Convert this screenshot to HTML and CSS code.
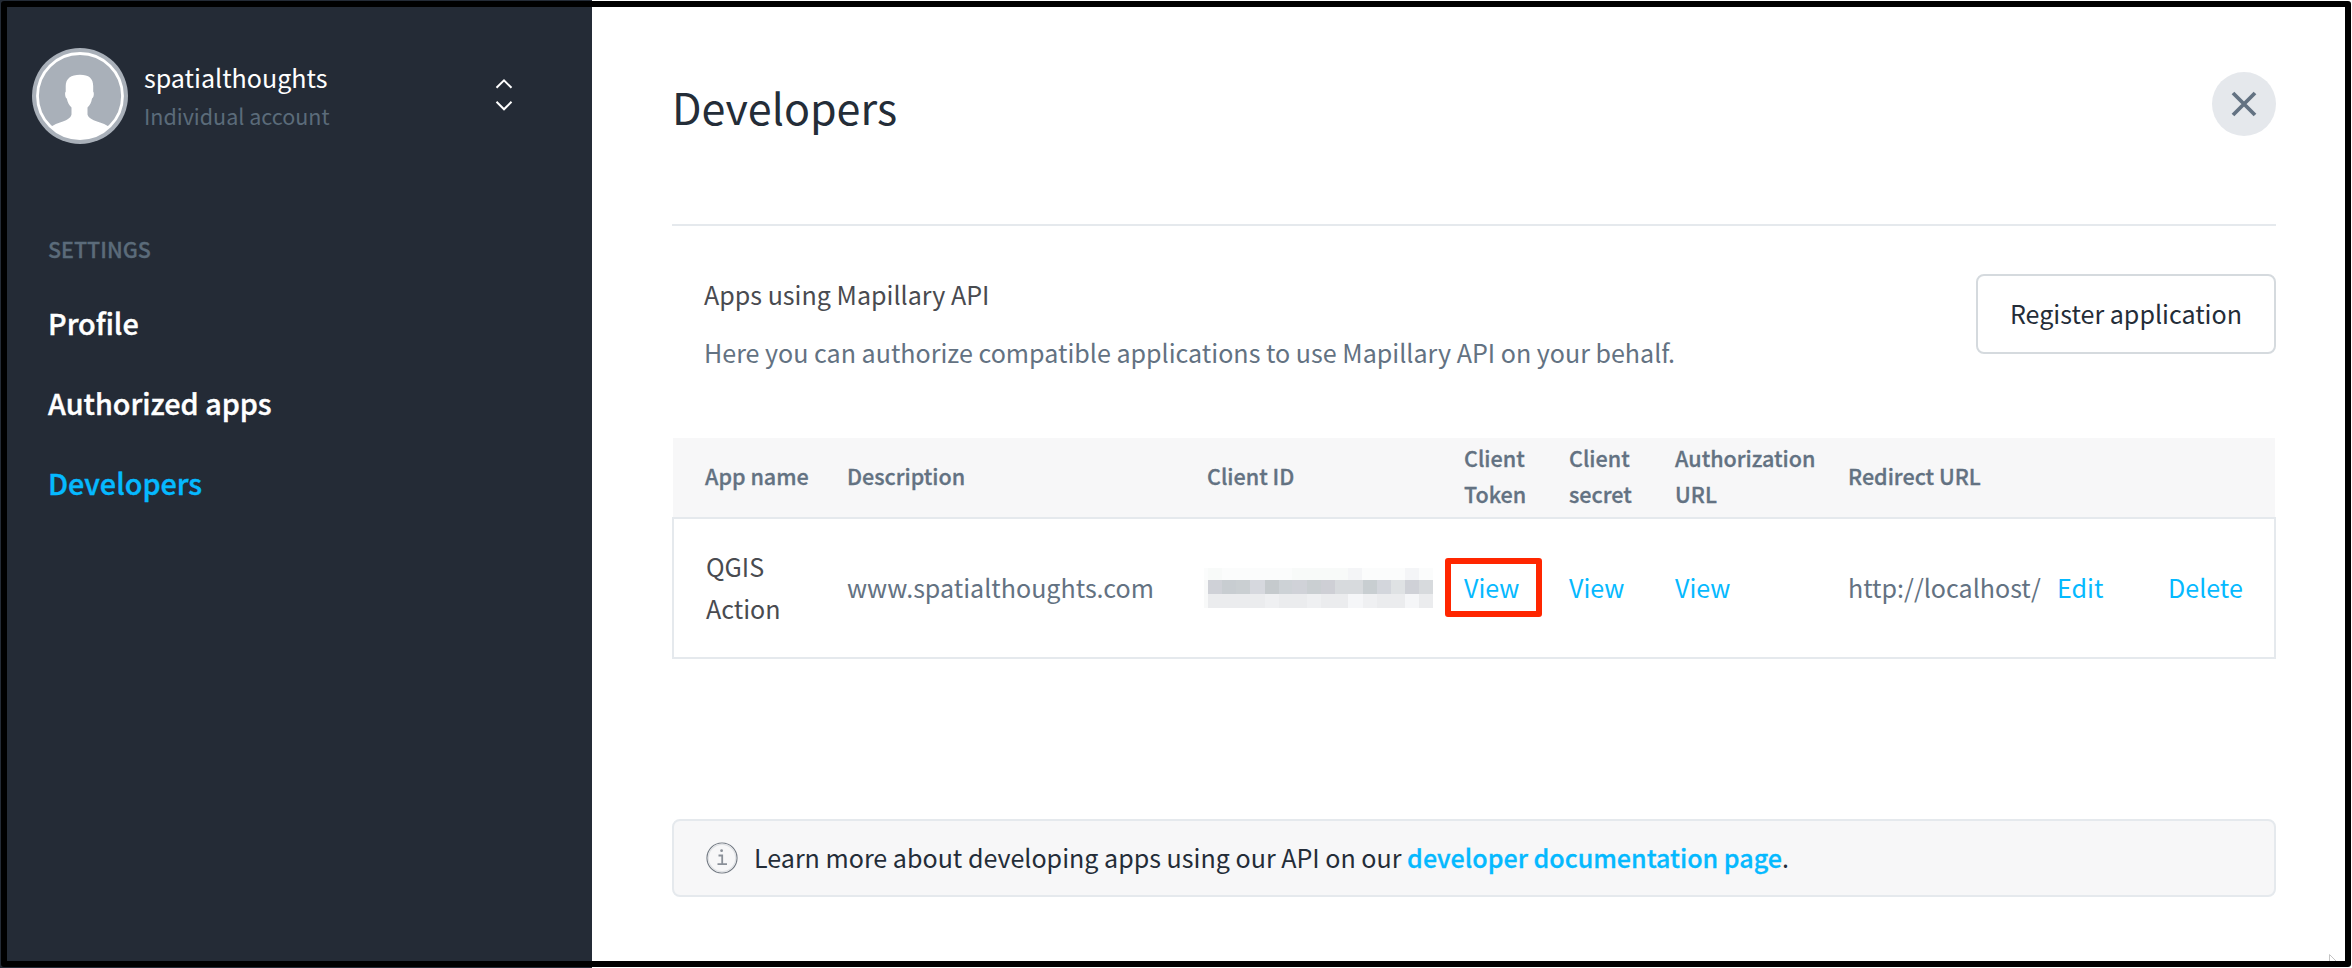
FILE: index.html
```html
<!DOCTYPE html>
<html lang="en">
<head>
<meta charset="utf-8">
<title>Developers</title>
<link rel="stylesheet" href="styles.css">
</head>
<body>
<div class="app">
  <aside class="sidebar">
    <div class="account">
      <svg class="avatar" viewBox="0 0 96 96">
        <defs><clipPath id="disc"><circle cx="48" cy="48" r="42.5"/></clipPath></defs>
        <circle cx="48" cy="48" r="48" fill="#a9b0b9"/>
        <g clip-path="url(#disc)" fill="#fff">
          <path d="M48 26.700C39 26.700 33.700 30.500 33.700 38V43.800C32.600 44.500 33 49.500 34.800 50.600C35.500 54.500 37.300 57.500 39.500 59.500V66.500C38.500 70.500 34 72.500 28 74.500C22 76.500 18 79 14 83V96H82V83C78 79 74 76.500 68 74.500C62 72.500 56.500 70.500 55.500 66.500V59.500C57.700 57.500 59.500 54.500 60 50.600C62 49.500 62.300 44.500 61.200 43.800V38C61.200 30.500 57 26.700 48 26.700Z"/>
        </g>
        <circle cx="48" cy="48" r="42.500" fill="none" stroke="#fff" stroke-width="2.800"/>
      </svg>
      <div class="account-text">
        <div class="account-name">spatialthoughts</div>
        <div class="account-type">Individual account</div>
      </div>
      <svg class="switcher" viewBox="0 0 20 36" fill="none" stroke="#fff" stroke-width="2">
        <path d="M2.500 10.800 10 3.300l7.500 7.500M2.500 24.800l7.500 7.500 7.500-7.500"/>
      </svg>
    </div>
    <div class="group-label">SETTINGS</div>
    <nav class="nav">
      <a class="nav-item">Profile</a>
      <a class="nav-item">Authorized apps</a>
      <a class="nav-item active">Developers</a>
    </nav>
  </aside>
  <main class="main">
    <header class="page-head">
      <h1 class="title">Developers</h1>
      <button class="close" aria-label="Close">
        <svg viewBox="0 0 64 64" fill="none" stroke="#637282" stroke-width="3.800"><path d="M21 21 43 43M43 21 21 43"/></svg>
      </button>
    </header>
    <section class="intro">
      <div>
        <div class="intro-title">Apps using Mapillary API</div>
        <div class="intro-text">Here you can authorize compatible applications to use Mapillary API on your behalf.</div>
      </div>
      <button class="register">Register application</button>
    </section>
    <div class="table">
      <div class="cols thead">
        <span class="c">App name</span><span class="c">Description</span><span class="c">Client ID</span><span class="c">Client<br>Token</span><span class="c">Client<br>secret</span><span class="c">Authorization<br>URL</span><span class="c">Redirect URL</span>
      </div>
      <div class="cols row">
        <span class="c name">QGIS<br>Action</span>
        <span class="c">www.spatialthoughts.com</span>
        <svg class="redacted" viewBox="0 0 229 41" shape-rendering="crispEdges">
          <path fill="#fbfcfc" d="M0 0h229v12H0z"/><path fill="#f8faf9" d="M4 0h14v12H4zM88 0h56v12H88z"/><path fill="#f4f5f7" d="M144 0h14v12h-14zM201 0h14v12h-14z"/>
          <path fill="#f8f9f9" d="M0 12h4v28H0z"/>
          <path fill="#cfd1d7" d="M4 12h14v14H4z"/><path fill="#c8cdd1" d="M18 12h14v14H18z"/><path fill="#cacfd2" d="M32 12h14v14H32z"/><path fill="#d6d8de" d="M46 12h15v14H46z"/><path fill="#c5cacd" d="M61 12h14v14H61z"/><path fill="#cdd2d6" d="M75 12h13v14H75z"/><path fill="#d0d2d8" d="M88 12h15v14H88z"/><path fill="#cacfd2" d="M103 12h14v14h-14z"/><path fill="#cecfd5" d="M117 12h14v14h-14z"/><path fill="#d7dadd" d="M131 12h28v14h-28z"/><path fill="#c8ced1" d="M159 12h14v14h-14z"/><path fill="#d3d6dc" d="M173 12h14v14h-14z"/><path fill="#dfe2e4" d="M187 12h14v14h-14z"/><path fill="#cfd1d7" d="M201 12h14v14h-14z"/><path fill="#d7dadd" d="M215 12h14v14h-14z"/>
          <path fill="#ebecee" d="M4 26h225v14H4z"/><path fill="#eff0f2" d="M61 26h14v14H61zM103 26h14v14h-14zM159 26h14v14h-14z"/><path fill="#f5f6f8" d="M144 26h15v14h-15zM201 26h14v14h-14z"/>
        </svg>
        <span class="c"><a class="link marked">View</a></span>
        <span class="c"><a class="link">View</a></span>
        <span class="c"><a class="link">View</a></span>
        <span class="c">http://localhost/</span>
        <span class="c"><a class="link">Edit</a></span>
        <span class="c"><a class="link">Delete</a></span>
      </div>
    </div>
    <div class="notice">
      <svg class="info" viewBox="0 0 32 32" fill="none">
        <circle cx="16" cy="16" r="15" stroke="#737a83" stroke-width="1.200"/>
        <circle cx="16" cy="16" r="13.700" stroke="#dfe1e4" stroke-width="1.200"/>
        <path d="M12.500 13.500h3.700v8.500M11.500 22.200h9.500" stroke="#8a9098" stroke-width="1.800"/><circle cx="15.600" cy="8.700" r="1.400" fill="#8a9098"/>
      </svg>
      <span class="notice-text">Learn more about developing apps using our API on our <a class="doc">developer documentation page</a>.</span>
    </div>
  </main>
  <svg class="pointer" viewBox="0 0 9 8"><path d="M.5 8V.5L8 8" fill="#fff" stroke="#c4c4c4"/></svg>
  <div class="frame"></div>
</div>
</body>
</html>
```

FILE: styles.css
```css
*, *::after { box-sizing: border-box; }
body {
  margin: 0;
  font-family: "Noto Sans CJK JP", "Noto Sans", sans-serif;
  font-size: 25.07px;
  color: #637282;
  background: #fff;
}
.app { position: relative; display: flex; width: 2352px; height: 968px; overflow: hidden; }
.frame { position: absolute; inset: 1px 1px 1px 1px; border: 6px solid #000; border-radius: 3px; }
.pointer { position: absolute; left: 2329px; top: 954px; width: 9px; height: 8px; }

.sidebar { width: 592px; background: #242b36; padding: 48px 0 0 32px; }
.account { display: flex; height: 96px; }
.avatar { width: 96px; height: 96px; }
.account-text { padding: 9px 0 0 16px; width: 366px; }
.account-name { line-height: 40px; color: #fff; }
.account-type { font-size: 21.5px; line-height: 37px; color: #5b6b7a; }
.switcher { width: 20px; height: 36px; margin-top: 29px; }
.group-label { margin: 88px 0 0 16px; font-size: 21.5px; line-height: 34px; font-weight: 500; color: #5b6b7a; -webkit-text-stroke: 0.3px; }
.nav { display: flex; flex-direction: column; padding: 17px 0 0 16px; }
.nav-item { font-size: 28.75px; line-height: 80px; font-weight: 500; color: #fff; -webkit-text-stroke: 0.4px; }
.nav-item.active { color: #05b9ff; }

.main { flex: 1; padding: 72px 76px 0 80px; }
.page-head { display: flex; justify-content: space-between; height: 154px; border-bottom: 2px solid #e5e9ed; }
.title { margin: 2px 0 0; font-size: 43px; line-height: 64px; font-weight: 400; color: #242d38; }
.close { width: 64px; height: 64px; padding: 0; border: 0; border-radius: 50%; background: #e5e8ec; }
.close svg { display: block; }
.intro { display: flex; justify-content: space-between; padding-left: 32px; height: 212px; }
.intro-title { margin-top: 39px; line-height: 58px; color: #494b50; }
.intro-text { line-height: 58px; }
.register { width: 300px; height: 80px; margin-top: 48px; padding: 0 0 3px; border: 2px solid #d5dade; border-radius: 8px; background: #fff; font: inherit; color: #242d38; }
.cols { display: grid; grid-template-columns: 142px 360px 257px 105px 106px 173px 209px 111px auto; align-items: center; padding-left: 32px; }
.c { white-space: nowrap; }
.thead { height: 79px; margin: 0 1px; padding-left: 32px; padding-bottom: 3px; background: #f7f7f8; font-size: 21.55px; font-weight: 500; line-height: 36px; -webkit-text-stroke: 0.3px; }
.row { height: 142px; padding: 0 0 2px 31px; border: 2px solid #e5e9ed; line-height: 42px; }
.name { padding-left: 1px; color: #494b50; }
.redacted { width: 229px; height: 41px; margin: 3px 0 0 -3px; }
.link { color: #05b9ff; }
.marked { position: relative; }
.marked::after { content: ""; position: absolute; left: -19px; top: -11px; width: 97px; height: 59px; border: 6px solid #ff2600; border-radius: 3px; }
.notice { display: flex; align-items: center; height: 78px; margin-top: 160px; padding: 0 0 2px 32px; border: 2px solid #e5e9ed; border-radius: 8px; background: #f7f7f8; color: #242d38; }
.info { width: 32px; height: 32px; margin: 2px 16px 0 0; }
.doc { font-weight: 500; color: #05b9ff; -webkit-text-stroke: 0.3px; }
```
